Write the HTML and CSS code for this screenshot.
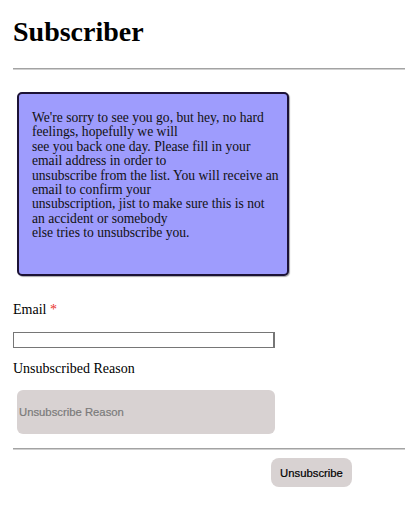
FILE: index.html
```html
<!DOCTYPE html>
<html>
<head>
<meta charset="utf-8">
<title>Subscriber</title>
<link rel="stylesheet" href="styles.css">
</head>
<body>
<div class="page">
  <h1 class="title">Subscriber</h1>
  <hr class="rule">
  <div class="notice">
    We're sorry to see you go, but hey, no hard feelings, hopefully we will<br>
    see you back one day. Please fill in your email address in order to<br>
    unsubscribe from the list. You will receive an email to confirm your<br>
    unsubscription, jist to make sure this is not an accident or somebody<br>
    else tries to unsubscribe you.
  </div>
  <form class="form">
    <label class="label label-email" for="email">Email <span class="req">*</span></label>
    <input class="email-input" id="email" type="email">
    <label class="label label-reason" for="reason">Unsubscribed Reason</label>
    <input class="reason-input" id="reason" type="text" placeholder="Unsubscribe Reason">
    <hr class="rule rule-bottom">
    <div class="actions">
      <button class="btn" type="button">Unsubscribe</button>
    </div>
  </form>
</div>
</body>
</html>
```

FILE: styles.css
```css
html, body {
  margin: 0;
  padding: 0;
  background: #ffffff;
}

body {
  font-family: "Liberation Serif", "Times New Roman", serif;
  color: #000;
}

.page {
  padding: 0 0 0 13px;
}

.title {
  margin: 16px 0 0;
  font-size: 28px;
  line-height: 32px;
  font-weight: bold;
}

.rule {
  display: block;
  margin: 20px 0 0;
  height: 0;
  border: 0;
  border-top: 1px solid #a3a3a3;
  border-bottom: 1px solid #d0d0d0;
}

.notice {
  box-sizing: border-box;
  width: 272px;
  height: 184px;
  margin: 22px 0 0 4px;
  padding: 17px 7px 0 13px;
  background: #9e9cfd;
  border: 2px solid #1c1236;
  border-radius: 5px;
  box-shadow: 1px 1px 1px rgba(0, 0, 0, 0.35);
  font-size: 13.6px;
  line-height: 14.4px;
  color: #111;
}

.form {
  margin: 0;
}

.label {
  display: block;
  font-size: 14px;
  line-height: 16px;
}

.label-email {
  margin-top: 26px;
}

.req {
  color: #e8312a;
}

.email-input {
  display: block;
  box-sizing: border-box;
  width: 262px;
  height: 16px;
  margin: 14px 0 0;
  padding: 0 2px;
  border: 1px solid #767676;
  border-right-width: 2px;
  background: #fff;
  font-size: 11px;
}

.label-reason {
  margin-top: 13px;
}

.reason-input {
  display: block;
  box-sizing: border-box;
  width: 258px;
  height: 44px;
  margin: 13px 0 0 4px;
  padding: 0 2px;
  border: 0;
  border-radius: 6px;
  background: #d8d2d2;
  font-family: "Liberation Sans", Arial, sans-serif;
  font-size: 11.3px;
  color: #333;
  outline: none;
}

.reason-input::placeholder {
  color: #7a7a7a;
  -webkit-text-stroke: 0.2px #7a7a7a;
}

.rule-bottom {
  margin-top: 14px;
}

.actions {
  display: flex;
  padding: 8px 0 0 258px;
}

.btn {
  box-sizing: border-box;
  width: 81px;
  height: 29px;
  padding: 0;
  border: 0;
  border-radius: 8px;
  background: #d8d2d2;
  font-family: "Liberation Sans", Arial, sans-serif;
  font-size: 11.3px;
  color: #000;
  -webkit-text-stroke: 0.2px #000;
}
```
